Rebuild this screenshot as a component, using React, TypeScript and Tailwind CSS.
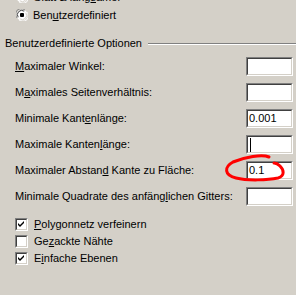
import React from "react";

const U = ({ c }: { c: string }) => <span className="underline underline-offset-[1px]">{c}</span>;

function Sunken({ children, className = "" }: { children?: React.ReactNode; className?: string }) {
  return (
    <div className={"border-t border-l border-t-[#808080] border-l-[#808080] border-b border-r border-b-white border-r-white " + className}>
      <div className="w-full h-full border-t border-l border-t-[#404040] border-l-[#404040] border-b border-r border-b-[#d4d0c8] border-r-[#d4d0c8] bg-white">
        {children}
      </div>
    </div>
  );
}

function Radio({ checked }: { checked?: boolean }) {
  return (
    <svg width="12" height="12" viewBox="0 0 12 12" className="shrink-0">
      <circle cx="6" cy="6" r="5.5" fill="white" />
      <path d="M1.2 9 A5.5 5.5 0 0 1 9 1.2" stroke="#808080" strokeWidth="1" fill="none" />
      <path d="M2.2 8.2 A4.3 4.3 0 0 1 8.2 2.2" stroke="#404040" strokeWidth="1" fill="none" />
      <path d="M10.8 3 A5.5 5.5 0 0 1 3 10.8" stroke="#ffffff" strokeWidth="1" fill="none" />
      <path d="M9.8 3.8 A4.3 4.3 0 0 1 3.8 9.8" stroke="#d4d0c8" strokeWidth="1" fill="none" />
      {checked && <rect x="4" y="4" width="4" height="4" rx="1" fill="black" />}
    </svg>
  );
}

function Check({ checked }: { checked?: boolean }) {
  return (
    <Sunken className="w-[13px] h-[13px] shrink-0">
      {checked && (
        <svg width="9" height="9" viewBox="0 0 9 9" className="block">
          <path d="M1 3 L3 5 L7 1 L7 3 L3 7 L1 5 Z" fill="black" />
        </svg>
      )}
    </Sunken>
  );
}

function Row({ label, value, cursor }: { label: React.ReactNode; value?: string; cursor?: boolean }) {
  return (
    <div className="h-[26px] flex items-start pl-[15px] pr-[3px]">
      <div className="flex-1 h-[19px] flex items-center">{label}</div>
      <Sunken className="w-[47px] h-[19px]">
        <div className="h-full flex items-center pl-[1px] leading-none">
          {value}
          {cursor && <div className="w-px h-[14px] bg-black ml-[1px]" />}
        </div>
      </Sunken>
    </div>
  );
}

export default function App() {
  return (
    <div
      className="relative w-[296px] h-[295px] bg-[#d4d0c8] overflow-hidden text-[11px] text-black leading-none"
      style={{ fontFamily: '"Liberation Sans", Arial, sans-serif' }}
    >
      <div className="mt-[-12px]">
        <div className="h-[18px] flex items-center pl-[16px] gap-[5px]">
          <Radio />
          <span>Glatt &amp; lang<U c="s" />amer</span>
        </div>
        <div className="h-[18px] flex items-center pl-[16px] gap-[5px]">
          <Radio checked />
          <span>Ben<U c="u" />tzerdefiniert</span>
        </div>
      </div>
      <div className="mt-[13px] h-[13px] flex items-center pl-[5px]">
        <span className="whitespace-nowrap">Benutzerdefinierte Optionen</span>
        <div className="flex-1 ml-[6px] mt-[1px]">
          <div className="h-px bg-[#808080]" />
          <div className="h-px bg-white" />
        </div>
      </div>
      <div className="mt-[7px]">
        <Row label={<span><U c="M" />aximaler Winkel:</span>} />
        <Row label={<span>M<U c="a" />ximales Seitenverhältnis:</span>} />
        <Row label={<span>Minimale Kant<U c="e" />nlänge:</span>} value="0.001" />
        <Row label={<span>Maximale Kanten<U c="l" />änge:</span>} cursor />
        <Row label={<span>Maximaler Abstan<U c="d" /> Kante zu Fläche:</span>} value="0.1" />
        <Row label={<span>Minimale Quadrate des anfäng<U c="l" />ichen Gitters:</span>} />
      </div>
      <div className="mt-[3px]">
        <div className="h-[17px] flex items-center pl-[15px] gap-[6px]">
          <Check checked />
          <span><U c="P" />olygonnetz verfeinern</span>
        </div>
        <div className="h-[17px] flex items-center pl-[15px] gap-[6px]">
          <Check />
          <span>Ge<U c="z" />ackte Nähte</span>
        </div>
        <div className="h-[17px] flex items-center pl-[15px] gap-[6px]">
          <Check checked />
          <span>E<U c="i" />nfache Ebenen</span>
        </div>
      </div>
      <svg className="absolute left-0 top-0 pointer-events-none" width="296" height="295">
        <path
          d="M269 157 C262 154, 245 157, 233 162 C224 167, 224 175, 236 178 C248 181, 268 180, 278 178 C285 176, 284 170, 280 166 C278 164, 276 163, 274 163"
          stroke="#ff0000"
          strokeWidth="3"
          fill="none"
          strokeLinecap="round"
        />
      </svg>
    </div>
  );
}
